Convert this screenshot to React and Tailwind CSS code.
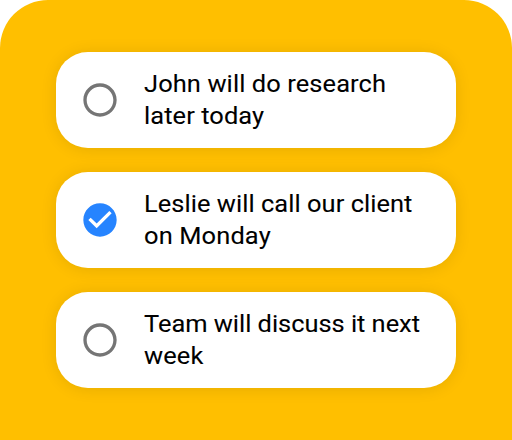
const TASKS = [
  {
    lines: [
      { text: "John will do research", spacing: "tracking-[0.09px]" },
      { text: "later today", spacing: "tracking-[0.07px]" },
    ],
    done: false,
  },
  {
    lines: [
      { text: "Leslie will call our client", spacing: "tracking-[0.04px]" },
      { text: "on Monday", spacing: "tracking-[0.12px]" },
    ],
    done: true,
  },
  {
    lines: [
      { text: "Team will discuss it next", spacing: "-tracking-[0.03px]" },
      { text: "week", spacing: "tracking-[0.12px]" },
    ],
    done: false,
  },
];

function Mark({ done }) {
  return (
    <svg className="h-10 w-10 shrink-0" viewBox="0 0 24 24" fill={done ? "#2684ff" : "#757575"}>
      {done ? (
        <path d="M12 2C6.48 2 2 6.48 2 12s4.48 10 10 10 10-4.48 10-10S17.52 2 12 2zm-2 15l-5-5 1.41-1.41L10 14.17l7.59-7.59L19 8l-9 9z" />
      ) : (
        <path d="M12 2C6.48 2 2 6.48 2 12s4.48 10 10 10 10-4.48 10-10S17.52 2 12 2zm0 18c-4.42 0-8-3.58-8-8s3.58-8 8-8 8 3.58 8 8-3.58 8-8 8z" />
      )}
    </svg>
  );
}

export default function App() {
  return (
    <div className="h-[440px] w-[512px] bg-white font-['Roboto',sans-serif]">
      <main className="flex h-full flex-col gap-6 rounded-t-[48px] bg-[#ffbf00] px-14 pt-[52px]">
        {TASKS.map((task) => (
          <div key={task.lines[0].text} className="flex h-24 items-center gap-6 rounded-[32px] bg-white pl-6 shadow-[0_1px_16px_rgba(0,0,0,0.1)]">
            <Mark done={task.done} />
            <p className="origin-left scale-x-[1.06] text-[24px] leading-8 whitespace-nowrap text-black [-webkit-text-stroke:0.08px_black]">
              {task.lines.map((line) => (
                <span key={line.text} className={`block ${line.spacing}`}>{line.text}</span>
              ))}
            </p>
          </div>
        ))}
      </main>
    </div>
  );
}
